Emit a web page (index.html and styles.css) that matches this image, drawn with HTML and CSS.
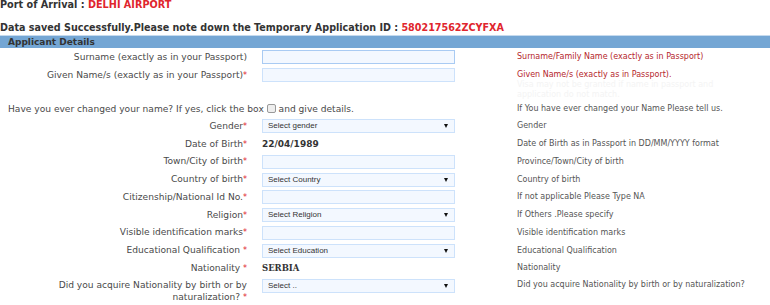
FILE: index.html
```html
<!DOCTYPE html>
<html lang="en">
<head>
    <meta charset="UTF-8">
    <title>Applicant Details</title>
    <link rel="stylesheet" href="styles.css">
</head>
<body>
    <div class="arrival">Port of Arrival : <span class="red">DELHI AIRPORT</span></div>
    <div class="saved">Data saved Successfully.Please note down the Temporary Application ID : <span class="red">580217562ZCYFXA</span></div>

    <div class="bar">Applicant Details</div>

    <div class="form">
        <div class="row">
            <div class="label">Surname (exactly as in your Passport)</div>
            <div class="field"><input class="box focus" type="text"></div>
            <div class="hint warn">Surname/Family Name (exactly as in Passport)</div>
        </div>
        <div class="row tall">
            <div class="label">Given Name/s (exactly as in your Passport)<span class="req">*</span></div>
            <div class="field"><input class="box" type="text"></div>
            <div class="hint warn">Given Name/s (exactly as in Passport).<br><span class="ghost">Visa may not be granted if name in passport and<br>application do not match.</span></div>
        </div>
        <div class="row">
            <div class="label wide">Have you ever changed your name? If yes, click the box <span class="check"></span> and give details.</div>
            <div class="hint">If You have ever changed your Name Please tell us.</div>
        </div>
        <div class="row">
            <div class="label">Gender<span class="req">*</span></div>
            <div class="field"><div class="box select">Select gender</div></div>
            <div class="hint">Gender</div>
        </div>
        <div class="row">
            <div class="label">Date of Birth<span class="req">*</span></div>
            <div class="field"><span class="value">22/04/1989</span></div>
            <div class="hint">Date of Birth as in Passport in DD/MM/YYYY format</div>
        </div>
        <div class="row">
            <div class="label">Town/City of birth<span class="req">*</span></div>
            <div class="field"><input class="box" type="text"></div>
            <div class="hint">Province/Town/City of birth</div>
        </div>
        <div class="row">
            <div class="label">Country of birth<span class="req">*</span></div>
            <div class="field"><div class="box select">Select Country</div></div>
            <div class="hint">Country of birth</div>
        </div>
        <div class="row">
            <div class="label">Citizenship/National Id No.<span class="req">*</span></div>
            <div class="field"><input class="box" type="text"></div>
            <div class="hint">If not applicable Please Type NA</div>
        </div>
        <div class="row">
            <div class="label">Religion<span class="req">*</span></div>
            <div class="field"><div class="box select">Select Religion</div></div>
            <div class="hint">If Others .Please specify</div>
        </div>
        <div class="row">
            <div class="label">Visible identification marks<span class="req">*</span></div>
            <div class="field"><input class="box" type="text"></div>
            <div class="hint">Visible identification marks</div>
        </div>
        <div class="row">
            <div class="label">Educational Qualification <span class="req">*</span></div>
            <div class="field"><div class="box select">Select Education</div></div>
            <div class="hint">Educational Qualification</div>
        </div>
        <div class="row">
            <div class="label">Nationality <span class="req">*</span></div>
            <div class="field"><span class="value serif">SERBIA</span></div>
            <div class="hint">Nationality</div>
        </div>
        <div class="row last">
            <div class="label">Did you acquire Nationality by birth or by naturalization? <span class="req">*</span></div>
            <div class="field"><div class="box select">Select ..</div></div>
            <div class="hint">Did you acquire Nationality by birth or by naturalization?</div>
        </div>
    </div>
</body>
</html>
```

FILE: styles.css
```css
body {
    margin: 0;
    font-family: "DejaVu Sans", Verdana, sans-serif;
    color: #4a4a4a;
    background: white;
    overflow: hidden;
}
.red {
    color: #e0252d;
}
.arrival {
    font-weight: bold;
    font-size: 9.7px;
    color: #333;
    line-height: 10px;
}
.saved {
    font-weight: bold;
    font-size: 9.6px;
    color: #333;
    line-height: 14px;
    margin-top: 11px;
}
.bar {
    margin-top: 0;
    background: #74a6d4;
    border-top: 1px solid #c5daee;
    color: #333;
    font-weight: bold;
    font-size: 9px;
    line-height: 12px;
    padding-left: 8px;
}
.form {
    font-size: 9.1px;
}
.row {
    display: grid;
    grid-template-columns: 250px 267px 1fr;
    align-items: center;
    min-height: 17.75px;
}
.label {
    text-align: right;
    padding-right: 3px;
    line-height: 12px;
}
.label.wide {
    grid-column: 1 / 3;
    text-align: left;
    padding-left: 8px;
}
.req {
    color: #e0252d;
    font-size: 8px;
}
.field {
    padding-left: 12px;
    display: flex;
}
.box {
    box-sizing: border-box;
    width: 193px;
    height: 14px;
    margin: 0;
    border: 1px solid #cde2fb;
    background: #f3f8ff;
    padding: 0;
    font-family: "Liberation Sans", Arial, sans-serif;
}
.box.focus {
    border-color: #a9cbf3;
}
.select {
    position: relative;
    font-size: 8px;
    line-height: 12px;
    padding-left: 5px;
    color: #333;
}
.select::after {
    content: "";
    position: absolute;
    right: 6px;
    top: 4px;
    border-left: 2.5px solid transparent;
    border-right: 2.5px solid transparent;
    border-top: 4px solid #111;
}
.value {
    font-weight: bold;
    color: #333;
    font-size: 9px;
}
.serif {
    font-family: "DejaVu Serif", serif;
    font-size: 8.5px;
}
.hint {
    font-size: 8px;
    color: #555;
    line-height: 10px;
}
.warn {
    color: #b5262c;
}
.ghost {
    color: #f4f4f4;
}
.tall {
    align-items: start;
}
.tall .label {
    padding-top: 3px;
}
.tall .field {
    padding-top: 2px;
}
.tall .hint {
    padding-top: 4px;
}
.check {
    display: inline-block;
    width: 7px;
    height: 7px;
    border: 1px solid #999;
    border-radius: 2px;
    background: #eee;
    vertical-align: -1px;
}
.last {
    align-items: start;
}
.last .label {
    padding-top: 2px;
}
.last .field {
    padding-top: 2px;
}
.last .hint {
    padding-top: 3px;
}
```
